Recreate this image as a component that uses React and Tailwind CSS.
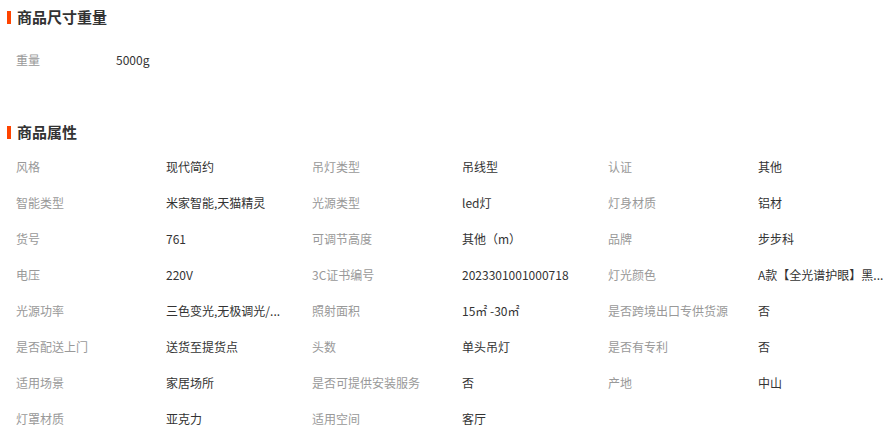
import React from "react";

const attrs = [
  ["风格", "现代简约"],
  ["吊灯类型", "吊线型"],
  ["认证", "其他"],
  ["智能类型", "米家智能,天猫精灵"],
  ["光源类型", "led灯"],
  ["灯身材质", "铝材"],
  ["货号", "761"],
  ["可调节高度", "其他（m）"],
  ["品牌", "步步科"],
  ["电压", "220V"],
  ["3C证书编号", "2023301001000718"],
  ["灯光颜色", "A款【全光谱护眼】黑..."],
  ["光源功率", "三色变光,无极调光/..."],
  ["照射面积", "15㎡ -30㎡"],
  ["是否跨境出口专供货源", "否"],
  ["是否配送上门", "送货至提货点"],
  ["头数", "单头吊灯"],
  ["是否有专利", "否"],
  ["适用场景", "家居场所"],
  ["是否可提供安装服务", "否"],
  ["产地", "中山"],
  ["灯罩材质", "亚克力"],
  ["适用空间", "客厅"],
];

const SectionTitle = ({ children }) => (
  <div className="flex items-center h-5">
    <span className="ml-[7px] w-[4px] h-[13px] bg-[#ff4400]" />
    <h3 className="ml-[6px] text-[15px] leading-5 font-bold text-[#333]">{children}</h3>
  </div>
);

const App = () => {
  return (
    <div
      className="w-[889px] h-[441px] bg-white overflow-hidden pt-[7px]"
      style={{ fontFamily: '"Noto Sans CJK SC", "Noto Sans", sans-serif' }}
    >
      {/* 尺寸重量 */}
      <SectionTitle>商品尺寸重量</SectionTitle>
      <div className="mt-[15px] h-9 flex items-center pl-4 text-xs">
        <span className="w-[100px] text-[#999]">重量</span>
        <span className="text-[#333]">5000g</span>
      </div>

      {/* 属性 */}
      <div className="mt-[44px]">
        <SectionTitle>商品属性</SectionTitle>
      </div>
      <div className="mt-[7px] pl-4 grid grid-cols-[296px_296px_296px] text-xs">
        {attrs.map(([k, v]) => (
          <div key={k} className="h-9 flex items-center">
            <span className="w-[150px] shrink-0 text-[#999] whitespace-nowrap">{k}</span>
            <span className="whitespace-nowrap text-[#333]">{v}</span>
          </div>
        ))}
      </div>
    </div>
  );
};

export default App;
